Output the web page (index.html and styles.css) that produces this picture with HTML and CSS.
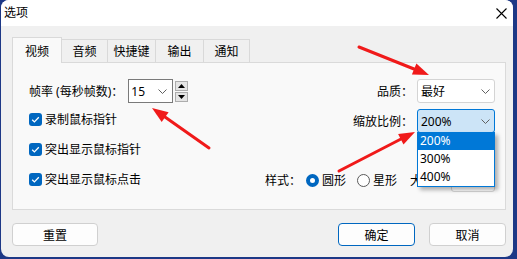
FILE: index.html
```html
<!DOCTYPE html>
<html lang="zh-CN">
<head>
    <meta charset="UTF-8">
    <title>选项</title>
    <link rel="stylesheet" href="styles.css">
</head>
<body>
    <div class="desktop">
        <div class="window">
            <div class="titlebar">
                <span class="title">选项</span>
                <svg class="close" width="11" height="11" viewBox="0 0 11 11">
                    <path d="M0.5 0.5 L10.5 10.5 M10.5 0.5 L0.5 10.5" stroke="#000" stroke-width="1.1" fill="none"/>
                </svg>
            </div>

            <div class="client">
                <div class="tabs">
                    <div class="tab active" style="width: 50px;">视频</div>
                    <div class="tab" style="width: 47px;">音频</div>
                    <div class="tab" style="width: 49px;">快捷键</div>
                    <div class="tab" style="width: 49px;">输出</div>
                    <div class="tab" style="width: 47px;">通知</div>
                </div>

                <div class="panel">
                    <div class="col-left">
                        <div class="field-row">
                            <span>帧率 (每秒帧数)：</span>
                            <div class="combo combo-classic">
                                <span>15</span>
                                <svg class="chevron" width="9" height="5" viewBox="0 0 9 5"><path d="M0.5 0.5 L4.5 4.5 L8.5 0.5" stroke="#606060" fill="none"/></svg>
                            </div>
                            <div class="spinner">
                                <div class="spin-btn"><svg width="7" height="4" viewBox="0 0 7 4"><path d="M0 4 L3.5 0 L7 4 Z" fill="#000"/></svg></div>
                                <div class="spin-btn"><svg width="7" height="4" viewBox="0 0 7 4"><path d="M0 0 L3.5 4 L7 0 Z" fill="#000"/></svg></div>
                            </div>
                        </div>

                        <div class="check-row first">
                            <svg class="checkbox" width="13" height="13" viewBox="0 0 13 13"><rect width="13" height="13" rx="3" fill="#0067c0"/><path d="M3.2 6.7 L5.4 8.9 L9.8 4.3" stroke="#fff" stroke-width="1.3" fill="none"/></svg>
                            <span>录制鼠标指针</span>
                        </div>
                        <div class="check-row">
                            <svg class="checkbox" width="13" height="13" viewBox="0 0 13 13"><rect width="13" height="13" rx="3" fill="#0067c0"/><path d="M3.2 6.7 L5.4 8.9 L9.8 4.3" stroke="#fff" stroke-width="1.3" fill="none"/></svg>
                            <span>突出显示鼠标指针</span>
                        </div>
                        <div class="check-row">
                            <svg class="checkbox" width="13" height="13" viewBox="0 0 13 13"><rect width="13" height="13" rx="3" fill="#0067c0"/><path d="M3.2 6.7 L5.4 8.9 L9.8 4.3" stroke="#fff" stroke-width="1.3" fill="none"/></svg>
                            <span>突出显示鼠标点击</span>
                        </div>
                    </div>

                    <div class="col-right">
                        <div class="opt-row">
                            <span>品质：</span>
                            <div class="combo">
                                <span>最好</span>
                                <svg class="chevron" width="9" height="5" viewBox="0 0 9 5"><path d="M0.5 0.5 L4.5 4.5 L8.5 0.5" stroke="#606060" fill="none"/></svg>
                            </div>
                        </div>
                        <div class="opt-row second">
                            <span>缩放比例：</span>
                            <div class="combo combo-open">
                                <span>200%</span>
                                <svg class="chevron" width="9" height="5" viewBox="0 0 9 5"><path d="M0.5 0.5 L4.5 4.5 L8.5 0.5" stroke="#606060" fill="none"/></svg>
                                <div class="dropdown">
                                    <div class="dropdown-item selected">200%</div>
                                    <div class="dropdown-item">300%</div>
                                    <div class="dropdown-item">400%</div>
                                </div>
                            </div>
                        </div>
                        <div class="style-row">
                            <span>样式：</span>
                            <span class="radio checked"></span>
                            <span class="radio-label">圆形</span>
                            <span class="radio"></span>
                            <span class="radio-label">星形</span>
                            <span class="size-label">大小：</span>
                            <div class="size-input"></div>
                        </div>
                    </div>
                </div>

                <div class="actions">
                    <button class="btn btn-reset">重置</button>
                    <button class="btn btn-ok">确定</button>
                    <button class="btn btn-cancel">取消</button>
                </div>
            </div>
        </div>

        <!-- annotation arrows -->
        <svg class="arrows" width="517" height="259" viewBox="0 0 517 259">
            <g stroke="#f01a1a" stroke-width="3" stroke-linecap="round" fill="#f01a1a">
                <line x1="359" y1="47" x2="414" y2="69"/>
                <polygon points="429,75 411.9,74.6 416.4,63.5" stroke="none"/>
                <line x1="209" y1="148" x2="165" y2="117"/>
                <polygon points="152,108 168.6,112.3 161.7,122.1" stroke="none"/>
                <line x1="339" y1="171" x2="401" y2="139"/>
                <polygon points="415,132 403.5,144.6 398.1,134" stroke="none"/>
            </g>
        </svg>
    </div>
</body>
</html>
```

FILE: styles.css
```css
body {
    margin: 0;
    font-family: "Noto Sans", "Noto Sans CJK SC", sans-serif;
    font-size: 12px;
    color: #000;
    background: #1d3886;
}

.desktop {
    position: relative;
    width: 517px;
    height: 259px;
    overflow: hidden;
    background: #1d3886;
}

.window {
    margin-left: 1px;
    width: 512px;
    height: 257px;
    border-radius: 8px;
    overflow: hidden;
    background: #f0f0f0;
    display: flex;
    flex-direction: column;
}

.titlebar {
    height: 26px;
    flex: none;
    background: #fff;
    display: flex;
    align-items: center;
    justify-content: space-between;
    padding: 0 6px 0 3px;
}

.title {
    line-height: 1;
}

.client {
    flex: 1;
    padding: 11px 7px 0 11px;
}

.tabs {
    display: flex;
    align-items: flex-end;
    height: 25px;
}

.tab {
    box-sizing: border-box;
    height: 23px;
    border: 1px solid #d9d9d9;
    border-bottom: none;
    margin-left: -1px;
    background: #f0f0f0;
    display: flex;
    align-items: center;
    justify-content: center;
}

.tab.active {
    margin-left: 0;
    height: 26px;
    margin-bottom: -1px;
    background: #f9f9f9;
    position: relative;
    z-index: 1;
}

.panel {
    box-sizing: border-box;
    height: 148px;
    border: 1px solid #dadada;
    background: #f9f9f9;
    display: flex;
    justify-content: space-between;
    padding: 16px 10px 0 16px;
}

.field-row {
    display: flex;
    align-items: center;
    height: 24px;
}

.combo {
    box-sizing: border-box;
    position: relative;
    width: 78px;
    height: 24px;
    border: 1px solid #d4d4d4;
    border-radius: 3px;
    background: #fff;
    display: flex;
    align-items: center;
    justify-content: space-between;
    padding: 0 4px 0 3px;
}

.combo-classic {
    width: 45px;
    margin-left: 5px;
    border-color: #7a7a7a;
    border-radius: 0;
    padding: 0 5px 0 2px;
}

.combo-open {
    background: #cce4f7;
    border-color: #0078d7;
}

.spinner {
    margin-left: 2px;
    display: flex;
    flex-direction: column;
    gap: 1px;
}

.spin-btn {
    box-sizing: border-box;
    width: 13px;
    height: 10px;
    border: 1px solid #adadad;
    background: #e5e5e5;
    display: flex;
    align-items: center;
    justify-content: center;
}

.check-row {
    display: flex;
    align-items: center;
    gap: 3px;
    height: 30px;
}

.check-row.first {
    margin-top: 1px;
}

.col-right {
    display: flex;
    flex-direction: column;
    align-items: flex-end;
}

.opt-row {
    display: flex;
    align-items: center;
    gap: 4px;
    height: 24px;
}

.opt-row.second {
    margin-top: 6px;
}

.dropdown {
    position: absolute;
    top: 100%;
    left: -1px;
    width: 78px;
    box-sizing: border-box;
    border: 1px solid #0078d7;
    border-top: none;
    background: #fff;
    box-shadow: 3px 3px 4px rgba(0, 0, 0, 0.3);
    z-index: 5;
}

.dropdown-item {
    height: 18px;
    line-height: 18px;
    padding-left: 2px;
}

.dropdown-item.selected {
    background: #0078d7;
    color: #fff;
}

.style-row {
    margin-top: 35px;
    display: flex;
    align-items: center;
    height: 24px;
}

.radio {
    box-sizing: border-box;
    width: 13px;
    height: 13px;
    border-radius: 50%;
    border: 1px solid #5a5a5a;
    background: #fff;
    margin-left: 11px;
}

.style-row > span:first-child + .radio {
    margin-left: 5px;
}

.radio.checked {
    border: 4px solid #0067c0;
}

.radio-label {
    margin-left: 3px;
}

.size-label {
    margin-left: 13px;
}

.size-input {
    box-sizing: border-box;
    width: 44px;
    height: 24px;
    margin-left: 5px;
    border: 1px solid #d4d4d4;
    border-radius: 3px;
    background: #fff;
}

.actions {
    display: flex;
    margin-top: 13px;
    gap: 14px;
}

.btn {
    box-sizing: border-box;
    height: 23px;
    width: 77px;
    border: 1px solid #d0d0d0;
    border-radius: 4px;
    background: #fdfdfd;
    font-family: inherit;
    font-size: 12px;
    color: #000;
    padding: 0;
}

.btn-reset {
    width: 86px;
    margin-right: auto;
}

.btn-ok {
    border-color: #0067c0;
}

.arrows {
    position: absolute;
    left: 0;
    top: 0;
    pointer-events: none;
}
```
